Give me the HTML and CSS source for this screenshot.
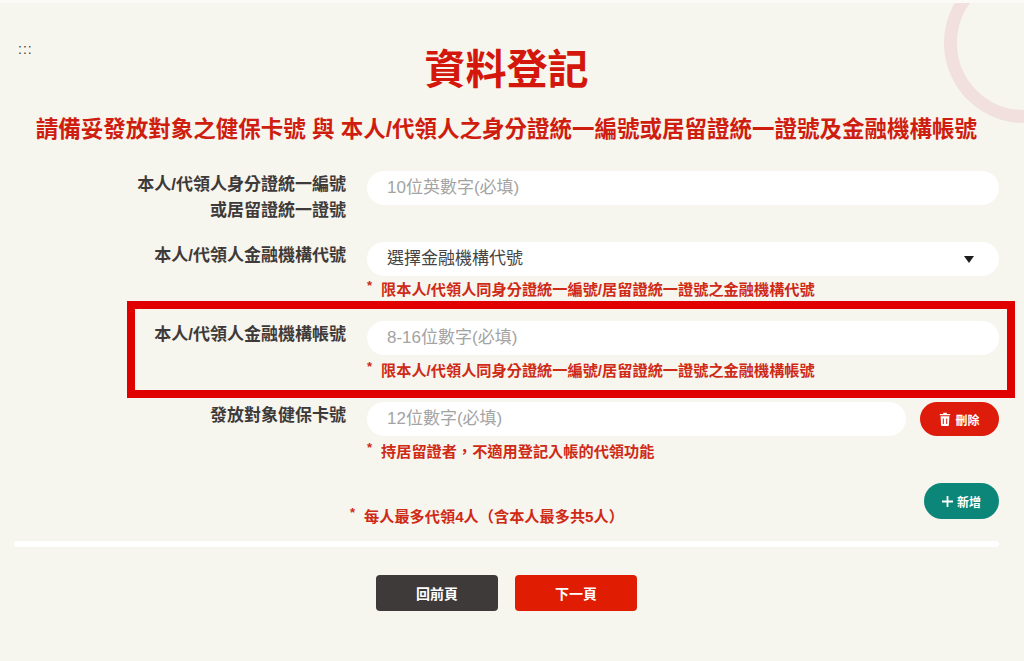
FILE: index.html
```
<!DOCTYPE html>
<html lang="zh-Hant">
<head>
<meta charset="utf-8">
<title>資料登記</title>
<link rel="stylesheet" href="styles.css">
</head>
<body>
<div class="deco"><div class="ring"></div></div>
<div class="page">
  <div class="skip">:::</div>
  <h1 class="title">資料登記</h1>
  <h2 class="subtitle">請備妥發放對象之健保卡號 與 本人/代領人之身分證統一編號或居留證統一證號及金融機構帳號</h2>
  <form class="form">
    <div class="row row-first">
      <div class="label">本人/代領人身分證統一編號<br>或居留證統一證號</div>
      <div class="field"><input class="pill" placeholder="10位英數字(必填)"></div>
    </div>
    <div class="row">
      <div class="label">本人/代領人金融機構代號</div>
      <div class="field">
        <div class="pill select"><span>選擇金融機構代號</span>
          <svg class="caret" width="10" height="7" viewBox="0 0 10 7"><path d="M0 0h10L5 7z" fill="#1c1c1c"/></svg>
        </div>
        <p class="note note-tight"><span class="star">*</span>限本人/代領人同身分證統一編號/居留證統一證號之金融機構代號</p>
      </div>
    </div>
    <div class="row">
      <div class="label">本人/代領人金融機構帳號</div>
      <div class="field">
        <input class="pill" placeholder="8-16位數字(必填)">
        <p class="note"><span class="star">*</span>限本人/代領人同身分證統一編號/居留證統一證號之金融機構帳號</p>
      </div>
    </div>
    <div class="row">
      <div class="label">發放對象健保卡號</div>
      <div class="field">
        <div class="with-btn">
          <input class="pill" placeholder="12位數字(必填)">
          <button type="button" class="round red">
            <svg width="12" height="14" viewBox="0 0 12 14"><path d="M4.2 2V.8h3.6V2h3.4v1.3H.8V2zM1.6 4.3h8.8l-.5 8.9q0 .8-.9.8H3q-.9 0-.9-.8zM3.8 6.4v5.6h1V6.4zM7.2 6.4v5.6h1V6.4z" fill="#fff" fill-rule="evenodd"/></svg>刪除
          </button>
        </div>
        <p class="note"><span class="star">*</span>持居留證者，不適用登記入帳的代領功能</p>
      </div>
    </div>
    <div class="foot">
      <p class="note"><span class="star">*</span>每人最多代領4人（含本人最多共5人）</p>
      <button type="button" class="round teal">
        <svg width="11" height="11" viewBox="0 0 11 11"><path d="M4.6 0h1.8v4.6H11v1.8H6.4V11H4.6V6.4H0V4.6h4.6z" fill="#fff"/></svg>新增
      </button>
    </div>
  </form>
  <div class="divider"></div>
  <div class="actions">
    <button type="button" class="act dark">回前頁</button>
    <button type="button" class="act primary">下一頁</button>
  </div>
</div>
<div class="highlight"></div>
</body>
</html>
```
FILE: styles.css
```
* { box-sizing: border-box; }
html, body { margin: 0; height: 661px; overflow: hidden; }
body {
  position: relative;
  background: #f6f5ee;
  color: #3e3a39;
  font-family: "Liberation Sans", "Noto Sans CJK TC", sans-serif;
}
.deco {
  position: absolute;
  left: 944px;
  top: 0;
  width: 80px;
  height: 124px;
  overflow: hidden;
}
.ring {
  position: absolute;
  left: 0;
  top: -37px;
  width: 160px;
  height: 160px;
  border: 13px solid #f1e0dd;
  border-radius: 50%;
}
.page {
  position: relative;
  width: 1024px;
  height: 661px;
  padding: 0 25px 0 14px;
  border-top: 3px solid #fbfaf6;
}
.skip {
  position: absolute;
  left: 18px;
  top: 38px;
  font-size: 14px;
  line-height: 16px;
  letter-spacing: 1px;
  color: #444;
}
.title {
  margin: 0;
  padding-top: 41px;
  text-align: center;
  font-size: 41px;
  line-height: 52px;
  font-weight: 700;
  color: #d3170b;
}
.subtitle {
  margin: 19px 0 0;
  text-align: center;
  font-size: 22.5px;
  line-height: 30px;
  font-weight: 700;
  color: #cf1d0f;
  white-space: nowrap;
}
.form { padding-top: 26px; }
.row {
  display: grid;
  grid-template-columns: 332px 1fr;
  column-gap: 21px;
  margin-bottom: 20px;
}
.row-first { margin-bottom: 18px; }
.label {
  text-align: right;
  font-size: 17px;
  line-height: 26px;
  font-weight: 700;
  padding-top: 1px;
  color: #3e3a39;
}
.pill {
  display: block;
  width: 100%;
  height: 34px;
  border: 0;
  border-radius: 17px;
  background: #fff;
  padding: 0 20px;
  font: 17px/34px "Liberation Sans", "Noto Sans CJK TC", sans-serif;
  color: #444;
  outline: 0;
}
.pill::placeholder { color: #a3a3a3; opacity: 1; }
.select {
  display: flex;
  align-items: center;
  justify-content: space-between;
}
.caret { margin-right: 5px; }
.note {
  margin: 5px 0 0;
  font-size: 15.2px;
  line-height: 22px;
  font-weight: 700;
  color: #cf2a16;
  white-space: nowrap;
}
.note-tight { margin-top: 3px; }
.star {
  display: inline-block;
  width: 14px;
  font-size: 13px;
  line-height: 14px;
  vertical-align: 5px;
}
.with-btn {
  display: flex;
  align-items: center;
  gap: 14px;
}
.with-btn .pill { flex: 1; width: auto; min-width: 0; }
.round {
  display: flex;
  align-items: center;
  justify-content: center;
  gap: 4px;
  border: 0;
  color: #fff;
  font: 700 12px "Liberation Sans", "Noto Sans CJK TC", sans-serif;
  padding: 0;
}
.red {
  flex: none;
  width: 79px;
  height: 34px;
  border-radius: 17px;
  background: #dd1c0c;
}
.teal {
  width: 75px;
  height: 36px;
  border-radius: 18px;
  background: #0c8679;
}
.foot {
  display: flex;
  justify-content: space-between;
  align-items: flex-start;
  padding-left: 336px;
  height: 58px;
}
.foot .note { margin: 23px 0 0; }
.divider {
  height: 6px;
  background: #fff;
  border-radius: 3px;
}
.actions {
  display: flex;
  justify-content: center;
  gap: 17px;
  margin-top: 28px;
}
.act {
  width: 122px;
  height: 36px;
  border: 0;
  border-radius: 4px;
  color: #fff;
  font: 700 14px "Liberation Sans", "Noto Sans CJK TC", sans-serif;
}
.dark { background: #3e3a39; }
.primary { background: #e01c02; }
.highlight {
  position: absolute;
  left: 127px;
  top: 301px;
  width: 888px;
  height: 97px;
  border: 8px solid #e00000;
  pointer-events: none;
}
```
